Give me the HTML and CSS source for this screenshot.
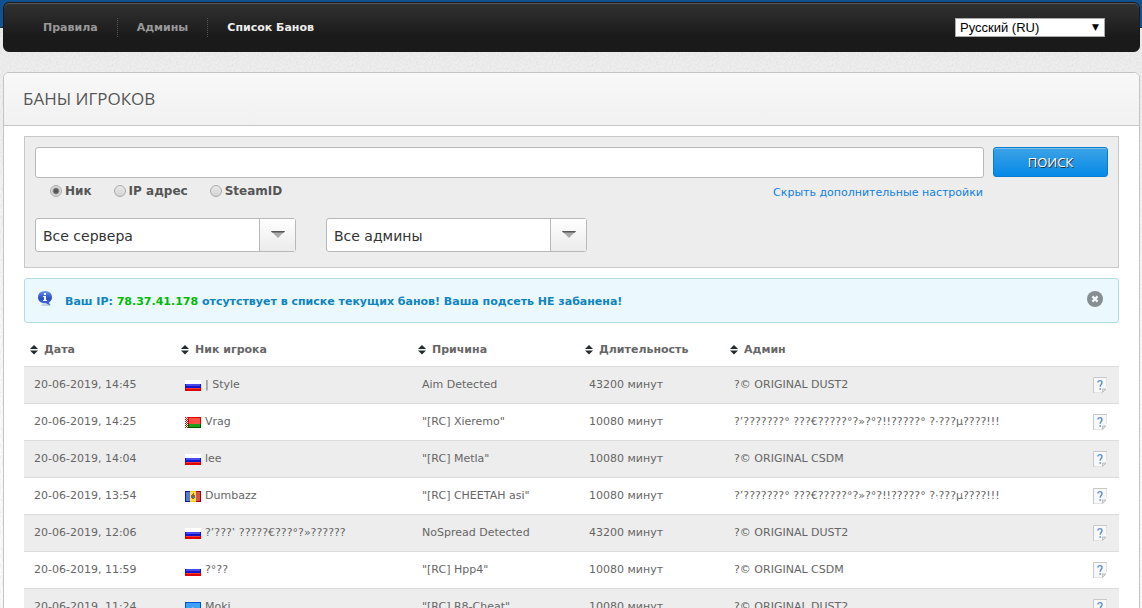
FILE: index.html
```html
<!DOCTYPE html>
<html lang="ru">
<head>
<meta charset="utf-8">
<title>Список Банов</title>
<link rel="stylesheet" href="styles.css">
</head>
<body>
<svg class="defs" width="0" height="0" aria-hidden="true">
  <symbol id="ru" viewBox="0 0 16 11">
    <path fill="#fff" d="M0 0h16v4H0z"/><path fill="#1414c8" d="M0 4h16v4H0z"/><path fill="#e00000" d="M0 8h16v3H0z"/>
    <path fill="#4a4af5" d="M1 4h14v2H1z"/><path fill="#ff3b30" d="M1 8h14v1H1z"/>
  </symbol>
  <symbol id="by" viewBox="0 0 16 11">
    <path fill="#e00000" d="M0 0h16v7H0z"/><path fill="#ff5048" d="M4 1h11v6H4z"/><path fill="#005a00" d="M3 7h13v4H3z"/><path fill="#1ea01e" d="M4 7h11v3H4z"/>
    <path fill="#fff" d="M0 0h3v11H0z"/><path stroke="#e00000" stroke-dasharray="1 1" d="M.5 0v11M2.5 0v11M1.5 1v10"/>
  </symbol>
  <symbol id="md" viewBox="0 0 16 11">
    <path fill="#0a1e96" d="M0 0h5v11H0z"/><path fill="#5a78d8" d="M1 1h4v9H1z"/><path fill="#f0c800" d="M5 0h6v11H5z"/><path fill="#ffe650" d="M5 1h6v9H5z"/>
    <path fill="#a00000" d="M11 0h5v11h-5z"/><path fill="#dc5046" d="M11 1h4v9h-4z"/><path fill="#a0641e" d="M7 3h1V2h1v2h1v3H9v1H7V7H6V4h1z"/><path fill="#4670c8" d="M7 5h2v2H7z"/>
  </symbol>
  <symbol id="kz" viewBox="0 0 16 11">
    <path fill="#0050d2" d="M0 0h16v11H0z"/><path fill="#3ca0ff" d="M1 1h14v9H1z"/><circle cx="8" cy="7" r="1.500" fill="#ffe650"/>
  </symbol>
  <symbol id="sort" viewBox="0 0 8 10">
    <path fill="#222b2e" d="M4 0l4 4H0zM0 5.500h8l-4 4z"/>
  </symbol>
  <symbol id="help" viewBox="0 0 14 16">
    <path fill="#f8f8f8" d="M0 0h14v11l-4 5H0z"/><path fill="none" stroke="#c8c8c8" d="M.5 16V.5H14"/><path fill="none" stroke="#e4e4e4" d="M1 15.500h8.500M13.500 1v9"/>
    <path fill="#e4e4e4" stroke="#b4b4b4" stroke-width=".8" d="M9.500 15.500v-3.500h3.500z"/>
    <path fill="none" stroke="#5b90d0" stroke-width="1.400" d="M4.900 5.600C4.900 3 9.200 3 9 5.600 8.900 7.200 7.200 7.400 7.200 9.800"/><path fill="#5b90d0" d="M6.400 11.200H8v1.600H6.400z"/>
  </symbol>
  <symbol id="arrow" viewBox="0 0 14 8">
    <path fill="#aaa" d="M0 0h14L7 7z"/><path fill="#555" d="M0 0h14l-1 1.500H1z"/>
  </symbol>
</svg>

<div class="page">
  <header class="topbar">
    <nav class="menu">
      <a href="#">Правила</a>
      <a href="#">Админы</a>
      <a href="#" class="active">Список Банов</a>
    </nav>
    <div class="language">
      <select aria-label="Язык"><option>Русский (RU)</option></select>
      <span class="language-mark" aria-hidden="true">▼</span>
    </div>
  </header>

  <main class="card">
    <h1>Баны игроков</h1>
    <div class="content">
      <form class="search">
        <input class="query" type="text" aria-label="Поиск">
        <button class="submit" type="button">ПОИСК</button>
        <div class="options">
          <div class="radios">
            <label><input type="radio" name="by" checked>Ник</label>
            <label><input type="radio" name="by">IP адрес</label>
            <label><input type="radio" name="by">SteamID</label>
          </div>
          <a href="#">Скрыть дополнительные настройки</a>
        </div>
        <div class="filters">
          <div class="drop"><select aria-label="Сервер"><option>Все сервера</option></select><span class="drop-mark"><svg width="14" height="8"><use href="#arrow"/></svg></span></div>
          <div class="drop"><select aria-label="Админ"><option>Все админы</option></select><span class="drop-mark"><svg width="14" height="8"><use href="#arrow"/></svg></span></div>
        </div>
      </form>

      <div class="notice">
        <svg width="16" height="16" viewBox="0 0 16 16" aria-hidden="true">
          <defs><linearGradient id="bubble" x2="0" y2="1"><stop stop-color="#6a98ea"/><stop offset=".5" stop-color="#2850c4"/><stop offset="1" stop-color="#4a70d8"/></linearGradient></defs>
          <ellipse cx="9" cy="14" rx="5" ry="1" fill="#c3d2dc"/>
          <path fill="url(#bubble)" d="M8 0c4.400 0 7 2.800 7 6.200 0 2.600-1.400 4.200-3 5.200l1.200 3-4.400-2.200C4 12.600 1 10 1 6.200 1 2.800 3.600 0 8 0z"/>
          <path fill="#fff" d="M7 2h2v2H7zM6 5h3v4h1v1H6V9h1V6H6z"/>
        </svg>
        <p>Ваш IP: <span class="ip">78.37.41.178</span> отсутствует в списке текущих банов! Ваша подсеть НЕ забанена!</p>
        <button class="close" type="button" aria-label="Закрыть">
          <svg width="16" height="16" viewBox="0 0 16 16"><circle cx="8" cy="8" r="8" fill="#868e92"/><path stroke="#f3f8fa" stroke-width="2.200" d="M5.400 5.400l5.200 5.200M10.600 5.400l-5.200 5.200"/></svg>
        </button>
      </div>

      <table class="bans">
        <colgroup><col class="c-date"><col class="c-nick"><col class="c-reason"><col class="c-length"><col><col class="c-info"></colgroup>
        <thead>
          <tr>
            <th><span><svg width="8" height="10"><use href="#sort"/></svg>Дата</span></th>
            <th><span><svg width="8" height="10"><use href="#sort"/></svg>Ник игрока</span></th>
            <th><span><svg width="8" height="10"><use href="#sort"/></svg>Причина</span></th>
            <th><span><svg width="8" height="10"><use href="#sort"/></svg>Длительность</span></th>
            <th><span><svg width="8" height="10"><use href="#sort"/></svg>Админ</span></th>
            <th></th>
          </tr>
        </thead>
        <tbody>
          <tr><td>20-06-2019, 14:45</td><td><svg class="flag"><use href="#ru"/></svg>| Style</td><td>Aim Detected</td><td>43200 минут</td><td>?© ORIGINAL DUST2</td><td><svg class="help"><use href="#help"/></svg></td></tr>
          <tr><td>20-06-2019, 14:25</td><td><svg class="flag"><use href="#by"/></svg>Vrag</td><td>"[RC] Xieremo"</td><td>10080 минут</td><td>?’???????° ???€?????°?»?°?!!?????° ?·???µ????!!!</td><td><svg class="help"><use href="#help"/></svg></td></tr>
          <tr><td>20-06-2019, 14:04</td><td><svg class="flag"><use href="#ru"/></svg>lee</td><td>"[RC] Metla"</td><td>10080 минут</td><td>?© ORIGINAL CSDM</td><td><svg class="help"><use href="#help"/></svg></td></tr>
          <tr><td>20-06-2019, 13:54</td><td><svg class="flag"><use href="#md"/></svg>Dumbazz</td><td>"[RC] CHEETAH asi"</td><td>10080 минут</td><td>?’???????° ???€?????°?»?°?!!?????° ?·???µ????!!!</td><td><svg class="help"><use href="#help"/></svg></td></tr>
          <tr><td>20-06-2019, 12:06</td><td><svg class="flag"><use href="#ru"/></svg>?’???‛ ?????€???°?»??????</td><td>NoSpread Detected</td><td>43200 минут</td><td>?© ORIGINAL DUST2</td><td><svg class="help"><use href="#help"/></svg></td></tr>
          <tr><td>20-06-2019, 11:59</td><td><svg class="flag"><use href="#ru"/></svg>?°??</td><td>"[RC] Hpp4"</td><td>10080 минут</td><td>?© ORIGINAL CSDM</td><td><svg class="help"><use href="#help"/></svg></td></tr>
          <tr><td>20-06-2019, 11:24</td><td><svg class="flag"><use href="#kz"/></svg>Moki</td><td>"[RC] R8-Cheat"</td><td>10080 минут</td><td>?© ORIGINAL DUST2</td><td><svg class="help"><use href="#help"/></svg></td></tr>
        </tbody>
      </table>
    </div>
  </main>
</div>
</body>
</html>
```
FILE: styles.css
```css
* {
  box-sizing: border-box;
}

body {
  margin: 0;
  height: 100vh;
  overflow: hidden;
  font: 11px/18px Verdana, "DejaVu Sans", sans-serif;
  color: #666;
  background:
    linear-gradient(#10508f, #115596) 0 0 / 100% 27px no-repeat,
    linear-gradient(#1e2c3a, #1e2c3a) 0 27px / 100% 1px no-repeat,
    url("data:image/svg+xml,%3Csvg xmlns='http://www.w3.org/2000/svg' width='120' height='120'%3E%3Cfilter id='n'%3E%3CfeTurbulence type='fractalNoise' baseFrequency='.5' numOctaves='2' stitchTiles='stitch'/%3E%3CfeColorMatrix values='0 0 0 0 .5 0 0 0 0 .5 0 0 0 0 .5 .4 0 0 0 -.12'/%3E%3C/filter%3E%3Crect width='120' height='120' filter='url(%23n)'/%3E%3C/svg%3E"),
    linear-gradient(#ececec, #fcfcfc 400px);
}

a {
  color: #1080e0;
  text-decoration: none;
}

.defs {
  position: absolute;
}

.page {
  padding: 2px 2px 0 3px;
}

.topbar {
  display: flex;
  align-items: center;
  justify-content: space-between;
  height: 50px;
  padding: 0 34px 0 19px;
  border: 1px solid #1a1a1a;
  border-radius: 6px;
  background: linear-gradient(#323232, #1a1a1a 70%);
  box-shadow: inset 0 1px 0 #5a5a5a;
}

.menu {
  display: flex;
}

.menu a {
  padding: 1px 19px 0;
  border-left: 1px dotted #555;
  font-weight: bold;
  color: #999;
}

.menu a:first-child {
  border-left-color: transparent;
}

.menu a.active {
  color: #eee;
}

.language {
  position: relative;
  width: 150px;
}

.language select {
  display: block;
  width: 100%;
  height: 19px;
  padding: 0 4px;
  appearance: none;
  border: 1px solid #a9a9a9;
  border-radius: 0;
  background: #fff;
  color: #000;
  font: 13px "Liberation Sans", Arial, sans-serif;
}

.language-mark {
  position: absolute;
  top: 0;
  right: 6px;
  color: #000;
  font-size: 9px;
  pointer-events: none;
}

.card {
  margin-top: 20px;
  border: 1px solid #c4c4c4;
  border-radius: 6px 6px 0 0;
  background: #fff;
  overflow: hidden;
}

h1 {
  margin: 0;
  padding: 0 19px 1px;
  border-bottom: 1px solid #c8c8c8;
  background: linear-gradient(#f8f8f8, #f1f1f1);
  font: 17px/51px "Open Sans", sans-serif;
  color: #555;
  text-transform: uppercase;
  text-shadow: 0 1px 0 #fff;
}

.content {
  padding: 10px 20px;
}

.search {
  display: grid;
  grid-template-columns: 1fr 115px;
  column-gap: 9px;
  padding: 10px 10px 15px;
  border: 1px solid #c8c8c8;
  background: #ededed;
}

.query {
  width: 100%;
  height: 31px;
  border: 1px solid #b8b8b8;
  border-radius: 3px;
  background: #fff;
}

.submit {
  height: 30px;
  padding: 0;
  border: 1px solid #0a7ccc;
  border-radius: 3px;
  background: linear-gradient(#3ea2e5, #048ae8);
  box-shadow: inset 0 1px 0 #7cc0ee;
  color: #fff;
  font: 13px "Open Sans", sans-serif;
  text-shadow: 1px 1px 0 #333;
}

.options {
  grid-column: 1;
  display: flex;
  align-items: flex-start;
  justify-content: space-between;
  padding: 4px 1px 0 15px;
}

.options a {
  padding-top: 2px;
}

.radios {
  display: flex;
  gap: 22px;
}

.radios label {
  display: flex;
  align-items: center;
  gap: 3px;
  font-size: 12px;
  font-weight: bold;
  color: #555;
}

.radios input {
  width: 12px;
  height: 12px;
  margin: 0;
  appearance: none;
  border: 1px solid #aaa;
  border-radius: 50%;
  background: linear-gradient(#e8e8e8, #d4d4d4);
}

.radios input:checked {
  background: radial-gradient(#555 0 2px, #ddd 4px);
}

.filters {
  grid-column: 1 / -1;
  display: flex;
  gap: 30px;
  margin-top: 16px;
}

.drop {
  position: relative;
  width: 261px;
}

.drop select {
  display: block;
  width: 100%;
  height: 34px;
  padding: 1px 44px 0 7px;
  appearance: none;
  border: 1px solid #b8b8b8;
  border-radius: 3px;
  background: #fff;
  color: #333;
  font: 14px Verdana, "DejaVu Sans", sans-serif;
}

.drop-mark {
  position: absolute;
  top: 1px;
  right: 1px;
  bottom: 1px;
  display: grid;
  place-items: center;
  width: 36px;
  border-left: 1px solid #b8b8b8;
  background: linear-gradient(#fff, #ebebeb);
  pointer-events: none;
}

.notice {
  display: flex;
  align-items: flex-start;
  gap: 12px;
  margin-top: 10px;
  padding: 12px 15px 11px 12px;
  border: 1px solid #b4dde2;
  border-radius: 3px;
  background: #ebf8fe;
  color: #0e84c0;
  font-weight: bold;
}

.notice p {
  flex: 1;
  margin: 2px 0 0;
}

.ip {
  color: #0b0;
}

.close {
  display: block;
  height: 16px;
  padding: 0;
  border: 0;
  background: none;
}

.bans {
  width: 100%;
  margin-top: 10px;
  border-collapse: collapse;
  table-layout: fixed;
}

.c-date { width: 151px; }
.c-nick { width: 237px; }
.c-reason { width: 167px; }
.c-length { width: 145px; }
.c-info { width: 36px; }

.bans th {
  height: 33px;
  padding: 2px 6px 0;
  text-align: left;
}

.bans th span {
  display: flex;
  align-items: center;
  gap: 6px;
}

.bans td {
  height: 37px;
  padding: 0 10px;
  border-top: 1px solid #dcdcdc;
}

.bans tbody tr:nth-child(odd) {
  background: #ededed;
}

.flag {
  width: 16px;
  height: 11px;
  margin-right: 4px;
  vertical-align: text-bottom;
}

.help {
  display: block;
  width: 14px;
  height: 16px;
}
```
